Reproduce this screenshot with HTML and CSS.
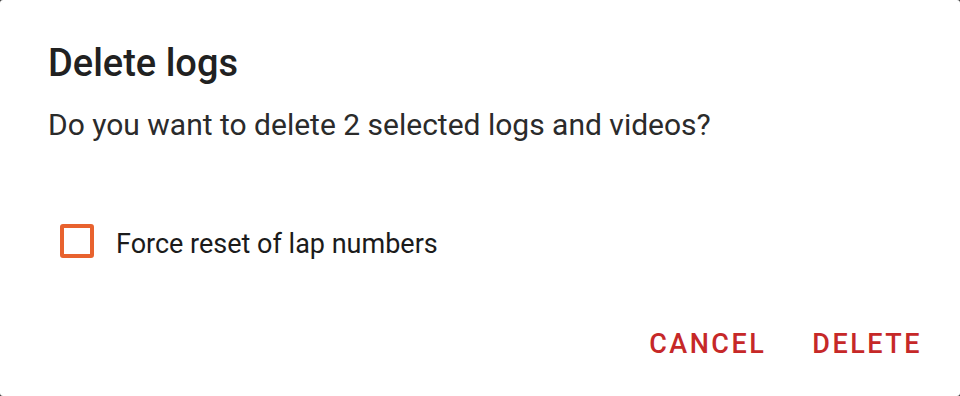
FILE: index.html
```
<!DOCTYPE html>
<html>
<head>
<meta charset="utf-8">
<link rel="stylesheet" href="styles.css">
</head>
<body>
<div class="dialog">
  <h1 class="title">Delete logs</h1>
  <p class="message">Do you want to delete 2 selected logs and videos?</p>
  <label class="check-row">
    <span class="checkbox"></span>
    <span class="check-label">Force reset of lap numbers</span>
  </label>
  <div class="actions">
    <button class="btn">CANCEL</button>
    <button class="btn">DELETE</button>
  </div>
</div>
</body>
</html>
```
FILE: styles.css
```
html, body {
  margin: 0;
  padding: 0;
  background: #3a3a3a;
}
body {
  width: 960px;
  height: 396px;
  overflow: hidden;
  font-family: Roboto, "Liberation Sans", sans-serif;
}
.dialog {
  box-sizing: border-box;
  width: 960px;
  height: 396px;
  background: #ffffff;
  border-radius: 3px;
  padding: 41px 38px 0 48px;
  display: flex;
  flex-direction: column;
}
.title {
  margin: 0;
  font-size: 38px;
  line-height: 44px;
  font-weight: 500;
  color: #212121;
}
.message {
  margin: 22px 0 0 0;
  font-size: 30px;
  line-height: 36px;
  font-weight: 400;
  color: #2b2b2b;
}
.check-row {
  margin: 81px 0 0 12px;
  display: flex;
  align-items: flex-start;
  gap: 22px;
}
.checkbox {
  box-sizing: border-box;
  width: 34px;
  height: 34px;
  border: 4px solid #e8622e;
  border-radius: 3px;
  flex: none;
}
.check-label {
  font-size: 27px;
  line-height: 40px;
  color: #1b1b1b;
}
.actions {
  margin-top: 60px;
  display: flex;
  justify-content: flex-end;
  gap: 46px;
}
.btn {
  border: none;
  background: none;
  padding: 0;
  font-family: Roboto, "Liberation Sans", sans-serif;
  font-size: 27px;
  line-height: 40px;
  font-weight: 500;
  letter-spacing: 2.5px;
  color: #c62828;
}
```
